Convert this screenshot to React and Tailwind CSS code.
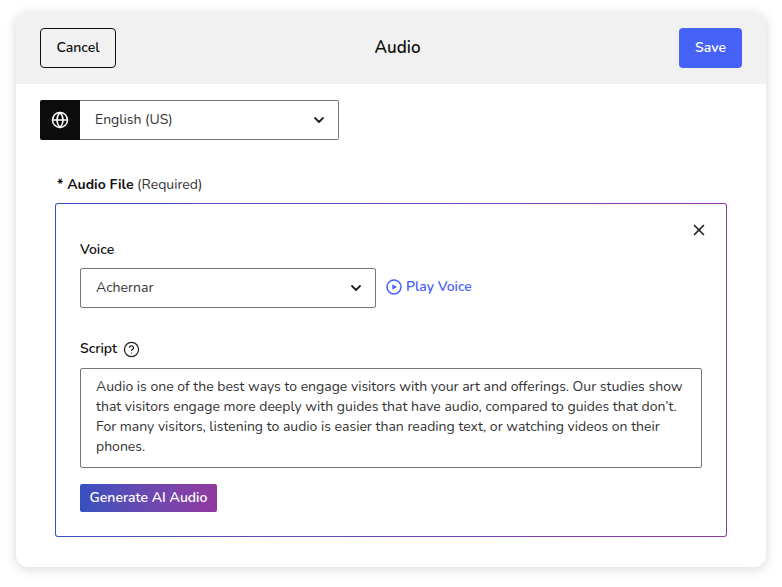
import { ChevronDown, CircleHelp, Globe, X } from "lucide-react";

const App = () => {
  return (
    <div className="min-h-[587px] bg-white pt-3 px-4 font-['Nunito','Noto_Sans',sans-serif] text-[#111]">
      <div className="w-[750px] h-[555px] rounded-xl bg-white shadow-[0_2px_12px_rgba(0,0,0,0.16)] overflow-hidden">
        {/* header */}
        <div className="h-[72px] bg-[#f1f1f1] px-6 flex items-center justify-between">
          <button className="w-[76px] h-10 rounded-[4px] border border-[#111] text-sm font-semibold">
            Cancel
          </button>
          <h1 className="text-[17px] font-semibold">Audio</h1>
          <button className="w-[63px] h-10 rounded-[4px] bg-[#4763f7] text-white text-sm font-semibold">
            Save
          </button>
        </div>

        <div className="px-6">
          {/* language */}
          <div className="mt-4 w-[299px] h-10 flex">
            <div className="w-10 bg-[#0c0c0c] rounded-l-[2px] flex items-center justify-center">
              <Globe size={18} color="#fff" strokeWidth={2} />
            </div>
            <div className="flex-1 border border-l-0 border-[#767676] rounded-r-[2px] pl-[15px] pr-[11px] flex items-center justify-between text-sm text-[#333]">
              <span>English (US)</span>
              <ChevronDown size={16} color="#222" strokeWidth={2.75} />
            </div>
          </div>

          <div className="mt-[35px] ml-[17px] h-5 text-sm leading-5 text-[#333]">
            <span className="font-bold text-[#111]">* Audio File</span> (Required)
          </div>

          {/* gradient border box */}
          <div className="mt-2 ml-[15px] w-[672px] rounded-[3px] p-px bg-gradient-to-r from-[#3a50c0] to-[#9238a8]">
            <div className="rounded-[2px] bg-white pt-[18px] pr-[18px] pb-6 pl-6">
              <div className="flex justify-end">
                <X size={18} color="#222" strokeWidth={2.25} className="-my-px" />
              </div>
              <div className="h-5 mt-0.5 text-sm leading-5 font-semibold">Voice</div>
              <div className="mt-2 flex items-center">
                <div className="w-[296px] h-10 border border-[#767676] rounded-[2px] pl-[15px] pr-[11px] flex items-center justify-between text-sm text-[#333]">
                  <span>Achernar</span>
                  <ChevronDown size={16} color="#222" strokeWidth={2.75} />
                </div>
                <a className="ml-2.5 -mt-0.5 flex items-center gap-1 text-sm font-semibold text-[#4763f7]">
                  <svg width="16" height="16" viewBox="0 0 16 16" fill="none">
                    <circle cx="8" cy="8" r="7" stroke="#4763f7" strokeWidth="1.5" />
                    <path d="M6.3 5.2 11 8l-4.7 2.8z" fill="#4763f7" />
                  </svg>
                  Play Voice
                </a>
              </div>
              <div className="mt-[31px] h-5 flex items-center gap-1.5 text-sm font-semibold">
                Script
                <CircleHelp size={17} color="#222" strokeWidth={1.75} />
              </div>
              <div className="mt-[9px] w-[622px] h-[100px] border border-[#767676] rounded-[2px] px-[15px] py-[8px] text-sm leading-5 text-[#333]">
                Audio is one of the best ways to engage visitors with your art and offerings. Our studies
                show that visitors engage more deeply with guides that have audio, compared to guides
                that don’t. For many visitors, listening to audio is easier than reading text, or watching videos
                on their phones.
              </div>
              <button className="mt-4 block w-[137px] h-7 rounded-[2px] bg-gradient-to-r from-[#3450c0] to-[#9238a0] text-white text-sm font-semibold">
                Generate AI Audio
              </button>
            </div>
          </div>
        </div>
      </div>
    </div>
  );
};

export default App;
